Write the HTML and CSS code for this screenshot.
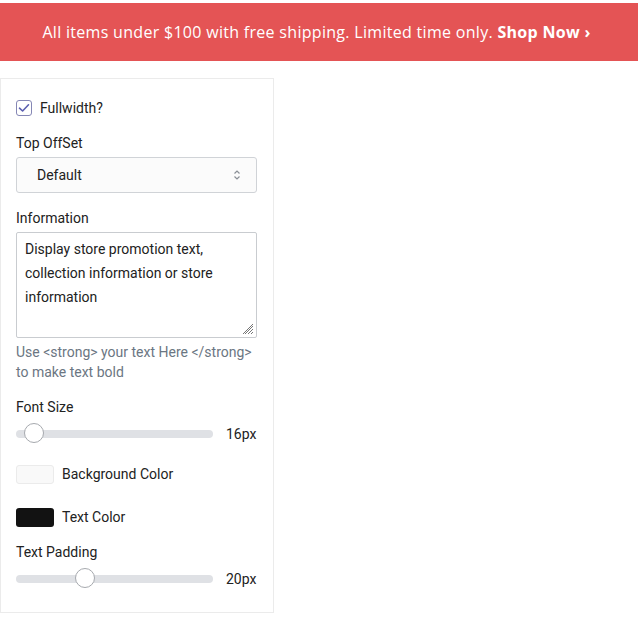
FILE: index.html
```html
<!DOCTYPE html>
<html>
<head>
<meta charset="utf-8">
<link rel="stylesheet" href="styles.css">
</head>
<body>
<div class="banner">All items under $100 with free shipping. Limited time only. <strong>Shop Now ›</strong></div>
<div class="panel">
  <label class="check-row">
    <span class="checkbox"><svg width="12" height="10" viewBox="0 0 12 10"><path d="M1.5 5.2 L4.6 8 L10.5 1.8" fill="none" stroke="#5b5fb0" stroke-width="1.6" stroke-linecap="round" stroke-linejoin="round"/></svg></span>
    <span>Fullwidth?</span>
  </label>
  <div class="field">
    <div class="label">Top OffSet</div>
    <div class="select"><span>Default</span>
      <svg width="8" height="12" viewBox="0 0 8 12"><path d="M1.5 4.5 L4 2 L6.5 4.5 M1.5 7.5 L4 10 L6.5 7.5" fill="none" stroke="#8a8f96" stroke-width="1.2"/></svg>
    </div>
  </div>
  <div class="field">
    <div class="label">Information</div>
    <div class="textarea">Display store promotion text, collection information or store information
      <svg class="grip" width="12" height="12" viewBox="0 0 12 12"><path d="M11 3 L3 11 M11 6 L6 11 M11 9 L9 11 M11 1 L1 11" stroke="#777" stroke-width="1"/></svg>
    </div>
    <div class="help">Use &lt;strong&gt; your text Here &lt;/strong&gt; to make text bold</div>
  </div>
  <div class="field">
    <div class="label">Font Size</div>
    <div class="slider-row">
      <div class="track"><span class="thumb" style="left: 8px"></span></div>
      <span class="value">16px</span>
    </div>
  </div>
  <div class="color-row">
    <span class="swatch light"></span><span>Background Color</span>
  </div>
  <div class="color-row">
    <span class="swatch dark"></span><span>Text Color</span>
  </div>
  <div class="field">
    <div class="label">Text Padding</div>
    <div class="slider-row">
      <div class="track"><span class="thumb" style="left: 59px"></span></div>
      <span class="value">20px</span>
    </div>
  </div>
</div>
</body>
</html>
```
FILE: styles.css
```css
html, body { margin: 0; padding: 0; background: #fff; }
body { font-family: Roboto, "Liberation Sans", sans-serif; color: #222; }
.banner {
  margin-top: 3px;
  width: 638px;
  height: 58px;
  background: #e45455;
  color: #fff;
  font-family: "Open Sans", sans-serif;
  font-size: 16px;
  letter-spacing: 0.3px;
  display: flex;
  align-items: center;
  justify-content: center;
  box-sizing: border-box;
  padding-right: 5px;
  white-space: pre;
}
.banner strong { font-weight: 700; }
.panel {
  margin-top: 17px;
  width: 274px;
  box-sizing: border-box;
  border: 1px solid #ebebeb;
  padding: 19px 16px 23px 15px;
  font-size: 14px;
  color: #222;
}
.check-row { display: flex; align-items: center; gap: 8px; height: 20px; }
.checkbox {
  width: 16px; height: 16px; box-sizing: border-box;
  border: 1px solid #8587b5; border-radius: 3px;
  display: flex; align-items: center; justify-content: center;
}
.field { margin-top: 15px; }
.label { line-height: 20px; height: 20px; margin-bottom: 4px; }
.select {
  height: 36px; box-sizing: border-box;
  border: 1px solid #d0d3d7; border-radius: 3px;
  background: #fbfbfb;
  display: flex; align-items: center; justify-content: space-between;
  padding: 0 15px 0 20px;
}
.textarea {
  position: relative;
  height: 106px; box-sizing: border-box;
  border: 1px solid #c9ccd0; border-radius: 2px;
  padding: 4px 10px 0 8px;
  line-height: 24px;
}
.grip { position: absolute; right: 2px; bottom: 2px; }
.help { color: #6b7682; line-height: 20px; margin-top: 4px; }
.slider-row { display: flex; align-items: center; height: 20px; margin-top: 7px; }
.track {
  position: relative;
  width: 197px; height: 8px; border-radius: 4px;
  background: #dfe1e5;
}
.thumb {
  position: absolute; top: -7px;
  width: 20px; height: 20px; box-sizing: border-box;
  border-radius: 50%; border: 1px solid #a6a9ae; background: #fff;
}
.value { margin-left: 13px; }
.color-row { display: flex; align-items: center; gap: 8px; margin-top: 20px; height: 20px; }
.swatch { width: 38px; height: 19px; box-sizing: border-box; border-radius: 3px; }
.swatch.light { border: 1px solid #ebebeb; background: #f9f9f9; }
.swatch.dark { background: #121212; }
.color-row + .color-row { margin-top: 23px; }
```
